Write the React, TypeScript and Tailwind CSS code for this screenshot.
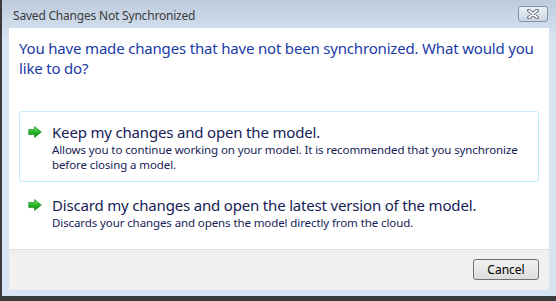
import React from "react";

function Arrow() {
  return (
    <svg width="14" height="12" viewBox="0 0 14 12" className="shrink-0">
      <defs>
        <linearGradient id="ag" x1="0" y1="0" x2="0" y2="1">
          <stop offset="0" stopColor="#8ae684" />
          <stop offset="0.45" stopColor="#2cba2a" />
          <stop offset="1" stopColor="#0b8a0f" />
        </linearGradient>
      </defs>
      <path d="M0.8 3.4 H6.6 V0.6 L13.3 6 L6.6 11.4 V8.6 H0.8 Z" fill="url(#ag)" stroke="#13881a" strokeWidth="0.7" strokeLinejoin="round" />
    </svg>
  );
}

function CloseBtn() {
  return (
    <div className="w-[30px] h-[16px] rounded-[3px] border border-[#8493a8] bg-gradient-to-b from-[#eef2f8] to-[#c9d4e3] flex items-center justify-center">
      <svg width="14" height="10" viewBox="0 0 14 10">
        <path d="M3 1.5 L11 8.5 M11 1.5 L3 8.5" stroke="#4b5566" strokeWidth="3.6" strokeLinecap="round" />
        <path d="M3 1.5 L11 8.5 M11 1.5 L3 8.5" stroke="#ffffff" strokeWidth="1.8" strokeLinecap="round" />
      </svg>
    </div>
  );
}

export default function App() {
  const font = { fontFamily: '"Noto Sans", "Open Sans", sans-serif' };
  return (
    <div className="w-[556px] h-[301px] bg-[#3b3b3b] pl-[2px] pb-[5px] overflow-hidden" style={font}>
      <div className="w-full h-full flex flex-col bg-gradient-to-b from-[#bccbdd] via-[#cbd8e8] to-[#d7e4f2] bg-[length:100%_40px] bg-no-repeat" style={{ backgroundColor: "#d7e4f2" }}>
        <div className="h-[28px] flex items-center justify-between pl-[11px] pr-[8px]">
          <span className="text-[12px] text-[#3a3a3a] tracking-[-0.2px] pt-[4px]">Saved Changes Not Synchronized</span>
          <CloseBtn />
        </div>
        <div className="flex-1 mx-[7px] mb-[6px] flex flex-col">
          <div className="flex-1 bg-white flex flex-col px-[10px]">
            <div className="pt-[10px] text-[15px] leading-[20px] text-[#1a3aa6] tracking-[-0.18px]">
              You have made changes that have not been synchronized. What would you like to do?
            </div>
            <div className="mt-[33px] rounded-[3px] border border-[#bfeaf8] h-[71px] flex flex-col pl-[8px] pt-[10px]">
              <div className="flex items-center gap-[10px]">
                <Arrow />
                <span className="text-[15px] leading-[20px] text-[#151c55] tracking-[-0.18px]">Keep my changes and open the model.</span>
              </div>
              <div className="pl-[24px] text-[11.5px] leading-[15px] text-[#151c55] tracking-[-0.1px]">
                Allows you to continue working on your model. It is recommended that you synchronize before closing a model.
              </div>
            </div>
            <div className="mt-[4px] flex flex-col pl-[9px] pt-[9px]">
              <div className="flex items-center gap-[10px]">
                <Arrow />
                <span className="text-[15px] leading-[20px] text-[#151c55] tracking-[-0.18px]">Discard my changes and open the latest version of the model.</span>
              </div>
              <div className="pl-[24px] text-[11.5px] leading-[15px] text-[#151c55] tracking-[-0.1px]">
                Discards your changes and opens the model directly from the cloud.
              </div>
            </div>
          </div>
          <div className="h-[41px] bg-[#f0f0f0] border-t border-[#dfdfdf] flex items-start justify-end pr-[10px] pt-[9px]">
            <button className="w-[66px] h-[21px] rounded-[3px] border border-[#707070] bg-gradient-to-b from-[#f2f2f2] to-[#dcdcdc] text-[12px] text-black flex items-center justify-center">
              Cancel
            </button>
          </div>
        </div>
      </div>
    </div>
  );
}
